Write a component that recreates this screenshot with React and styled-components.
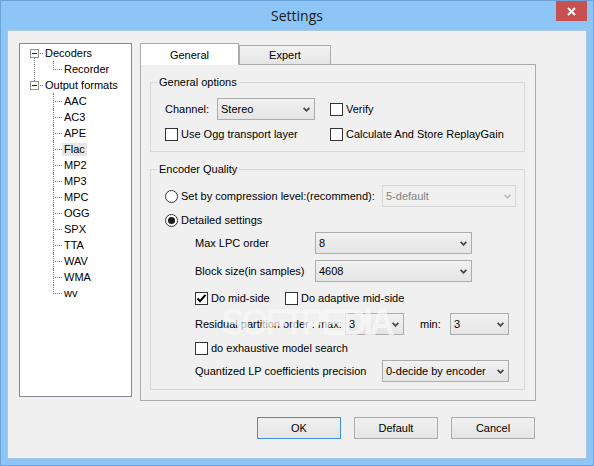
import styled, { createGlobalStyle, css } from "styled-components"

const GlobalStyle = createGlobalStyle`
  html, body {
    margin: 0;
    padding: 0;
  }
  body {
    width: 594px;
    height: 466px;
    overflow: hidden;
    font-family: "Liberation Sans", Arial, sans-serif;
    font-size: 11px;
    color: #000;
  }
  * {
    box-sizing: border-box;
  }
`

const Window = styled.div`
  position: relative;
  width: 594px;
  height: 466px;
  display: flex;
  flex-direction: column;
  padding: 0 6px 6px;
  background: #8cc5f6;
  border: 1px solid #6ea3d8;
`

const TitleBar = styled.div`
  height: 29px;
  display: grid;
  grid-template-columns: 1fr auto 1fr;
  align-items: center;
`

const Title = styled.div`
  grid-column: 2;
  font-family: "Open Sans", "Noto Sans", sans-serif;
  font-size: 14px;
  color: #1b1b1b;
`

const CloseButton = styled.div`
  justify-self: end;
  align-self: start;
  width: 31px;
  height: 20px;
  display: flex;
  align-items: center;
  justify-content: center;
  background: #c75050;
`

const Client = styled.div`
  flex: 1;
  display: flex;
  flex-direction: column;
  background: #f0f0f0;
  border: 1px solid #a9c6e2;
`

const Body = styled.div`
  display: flex;
  gap: 8px;
  padding: 12px 0 0 11px;
`

/* tree on the left */
const Tree = styled.div`
  width: 113px;
  height: 354px;
  padding-top: 1px;
  background: #fff;
  border: 1px solid #828790;
`

const TreeNode = styled.div`
  position: relative;
  ${(p) =>
    !p.$last &&
    css`
      &::before {
        content: "";
        position: absolute;
        left: 14px;
        top: 13px;
        bottom: -4px;
        border-left: 1px dotted #7a7a7a;
      }
    `}
`

const NodeRow = styled.div`
  height: 16px;
  display: flex;
  align-items: center;
  padding-left: 10px;
`

const Expander = styled.span`
  position: relative;
  width: 9px;
  height: 9px;
  border: 1px solid #919191;
  background: #fff;

  &::after {
    content: "";
    position: absolute;
    left: 1px;
    top: 3px;
    width: 5px;
    height: 1px;
    background: #222;
  }
`

const HDots = styled.span`
  width: 3px;
  margin-left: 1px;
  border-top: 1px dotted #7a7a7a;
`

const NodeText = styled.span`
  padding: 0 2px;
  line-height: 13px;
  white-space: nowrap;
  background: ${(p) => (p.$selected ? "#e6e6e6" : "transparent")};
`

const LeafRow = styled.div`
  position: relative;
  height: 16px;
  display: flex;
  align-items: center;
  padding-left: 42px;

  &::before {
    content: "";
    position: absolute;
    left: 33px;
    top: 0;
    height: ${(p) => (p.$last ? "9px" : "16px")};
    border-left: 1px dotted #7a7a7a;
  }

  &::after {
    content: "";
    position: absolute;
    left: 35px;
    top: 8px;
    width: 7px;
    border-top: 1px dotted #7a7a7a;
  }
`

/* tabs */
const Tabs = styled.div`
  width: 396px;
  display: flex;
  flex-direction: column;
`

const TabStrip = styled.div`
  height: 21px;
  display: flex;
  align-items: flex-end;
`

const Tab = styled.div`
  width: ${(p) => p.$w}px;
  display: flex;
  align-items: center;
  justify-content: center;
  border: 1px solid #acacac;
  border-bottom: none;
  ${(p) =>
    p.$active
      ? css`
          height: 22px;
          margin-bottom: -1px;
          position: relative;
          z-index: 1;
          background: #fff;
        `
      : css`
          height: 19px;
          background: linear-gradient(#f2f2f2, #e5e5e5);
        `}
`

const Panel = styled.div`
  height: 337px;
  padding: 10px 10px 0 9px;
  background: #f0f0f0;
  border: 1px solid #acacac;
`

const Group = styled.fieldset`
  margin: ${(p) => p.$mt || 0}px 0 0;
  padding: 9px 8px ${(p) => p.$pb}px 14px;
  min-width: 0;
  border: 1px solid #d9d9d9;
`

const Legend = styled.legend`
  margin-left: -8px;
  padding: 0 2px;
  line-height: 14px;
`

const OptionsGrid = styled.div`
  display: grid;
  grid-template-columns: 165px 1fr;
  grid-template-rows: 22px 16px;
  row-gap: 6px;
  align-items: center;
`

const Row = styled.div`
  height: ${(p) => p.$h}px;
  margin-top: ${(p) => p.$mt || 0}px;
  padding-left: ${(p) => p.$indent || 0}px;
  display: flex;
  align-items: center;
`

const Label = styled.span`
  width: ${(p) => (p.$w ? `${p.$w}px` : "auto")};
  margin-left: ${(p) => p.$ml || 0}px;
  flex-shrink: 0;
  white-space: nowrap;
`

const Combo = styled.div`
  width: ${(p) => p.$w}px;
  height: 22px;
  margin-left: ${(p) => (p.$push ? "auto" : "0")};
  display: flex;
  align-items: center;
  justify-content: space-between;
  padding: 0 4px 0 3px;
  border: 1px solid ${(p) => (p.$disabled ? "#d9d9d9" : "#acacac")};
  background: ${(p) =>
    p.$disabled ? "#f0f0f0" : "linear-gradient(#f1f1f1, #e5e5e5)"};
  color: ${(p) => (p.$disabled ? "#838383" : "#000")};
  white-space: nowrap;
`

const Choice = styled.label`
  width: ${(p) => (p.$w ? `${p.$w}px` : "auto")};
  display: inline-flex;
  align-items: center;
  gap: 3px;
  white-space: nowrap;
`

const Box = styled.span`
  width: 13px;
  height: 13px;
  flex-shrink: 0;
  display: flex;
  align-items: center;
  justify-content: center;
  background: #fff;
  border: 1px solid #333;
`

const Circle = styled.span`
  width: 13px;
  height: 13px;
  flex-shrink: 0;
  display: flex;
  align-items: center;
  justify-content: center;
  border-radius: 50%;
  background: #fff;
  border: 1px solid #333;

  &::after {
    content: "";
    width: 7px;
    height: 7px;
    border-radius: 50%;
    background: ${(p) => (p.$on ? "#1c1c1c" : "transparent")};
  }
`

const Footer = styled.div`
  display: flex;
  justify-content: flex-end;
  gap: 13px;
  margin-top: 16px;
  padding-right: 51px;
`

const Button = styled.div`
  width: 84px;
  height: 22px;
  display: flex;
  align-items: center;
  justify-content: center;
  border: 1px solid ${(p) => (p.$default ? "#3d8ee0" : "#acacac")};
  background: linear-gradient(#f0f0f0, #e5e5e5);
`

// faint site watermark laid over the dialog
const Watermark = styled.div`
  position: absolute;
  left: 220px;
  top: 304px;
  font-family: "Liberation Sans", Arial, sans-serif;
  font-weight: bold;
  font-size: 36px;
  line-height: 1;
  letter-spacing: -4px;
  color: rgba(255, 255, 255, 0.7);
  text-shadow: 0 0 1px rgba(0, 0, 0, 0.06);
  pointer-events: none;

  sup {
    font-size: 9px;
    letter-spacing: 0;
    vertical-align: top;
    margin-left: 3px;
  }
`

const Chevron = ({ disabled }) => (
  <svg width="7" height="5" viewBox="0 0 7 5">
    <polyline
      points="0.6,0.8 3.5,3.8 6.4,0.8"
      fill="none"
      stroke={disabled ? "#bdbdbd" : "#444"}
      strokeWidth="1.7"
    />
  </svg>
)

const Select = ({ value, w, disabled, push }) => (
  <Combo $w={w} $disabled={disabled} $push={push}>
    <span>{value}</span>
    <Chevron disabled={disabled} />
  </Combo>
)

const Checkbox = ({ children, checked, w }) => (
  <Choice $w={w}>
    <Box>
      {checked && (
        <svg width="11" height="11" viewBox="0 0 11 11">
          <polyline
            points="1.5,5.5 4,8.2 9.5,1.8"
            fill="none"
            stroke="#000"
            strokeWidth="2"
          />
        </svg>
      )}
    </Box>
    {children}
  </Choice>
)

const Radio = ({ children, checked }) => (
  <Choice>
    <Circle $on={checked} />
    {children}
  </Choice>
)

const formats = ["AAC", "AC3", "APE", "Flac", "MP2", "MP3", "MPC", "OGG", "SPX", "TTA", "WAV", "WMA", "wv"]

function App() {
  return (
    <>
      <GlobalStyle />
      <Window>
        <TitleBar>
          <Title>Settings</Title>
          <CloseButton>
            <svg width="9" height="9" viewBox="0 0 9 9">
              <path d="M1 1 L8 8 M8 1 L1 8" stroke="#fff" strokeWidth="2" />
            </svg>
          </CloseButton>
        </TitleBar>

        <Client>
          <Body>
            <Tree>
              <TreeNode>
                <NodeRow>
                  <Expander />
                  <HDots />
                  <NodeText>Decoders</NodeText>
                </NodeRow>
                <LeafRow $last>
                  <NodeText>Recorder</NodeText>
                </LeafRow>
              </TreeNode>
              <TreeNode $last>
                <NodeRow>
                  <Expander />
                  <HDots />
                  <NodeText>Output formats</NodeText>
                </NodeRow>
                {formats.map((f, i) => (
                  <LeafRow key={f} $last={i === formats.length - 1}>
                    <NodeText $selected={f === "Flac"}>{f}</NodeText>
                  </LeafRow>
                ))}
              </TreeNode>
            </Tree>

            <Tabs>
              <TabStrip>
                <Tab $w={99} $active>General</Tab>
                <Tab $w={92}>Expert</Tab>
              </TabStrip>
              <Panel>
                <Group $pb={9}>
                  <Legend>General options</Legend>
                  <OptionsGrid>
                    <Row $h={22}>
                      <Label $w={52}>Channel:</Label>
                      <Select value="Stereo" w={98} />
                    </Row>
                    <Checkbox>Verify</Checkbox>
                    <Checkbox>Use Ogg transport layer</Checkbox>
                    <Checkbox>Calculate And Store ReplayGain</Checkbox>
                  </OptionsGrid>
                </Group>

                <Group $mt={10} $pb={7}>
                  <Legend>Encoder Quality</Legend>
                  <Row $h={22}>
                    <Radio>Set by compression level:(recommend):</Radio>
                    <Select value="5-default" w={134} disabled push />
                  </Row>
                  <Row $h={18} $mt={4}>
                    <Radio checked>Detailed settings</Radio>
                  </Row>
                  <Row $h={22} $mt={3} $indent={30}>
                    <Label $w={120}>Max LPC order</Label>
                    <Select value="8" w={157} />
                  </Row>
                  <Row $h={22} $mt={6} $indent={30}>
                    <Label $w={120}>Block size(in samples)</Label>
                    <Select value="4608" w={157} />
                  </Row>
                  <Row $h={20} $mt={6} $indent={30}>
                    <Checkbox checked w={90}>Do mid-side</Checkbox>
                    <Checkbox>Do adaptive mid-side</Checkbox>
                  </Row>
                  <Row $h={22} $mt={5} $indent={30}>
                    <Label $w={150}>Residual partition order : max:</Label>
                    <Select value="3" w={59} />
                    <Label $w={30} $ml={16}>min:</Label>
                    <Select value="3" w={59} />
                  </Row>
                  <Row $h={20} $mt={3} $indent={30}>
                    <Checkbox>do exhaustive model search</Checkbox>
                  </Row>
                  <Row $h={22} $mt={2} $indent={30}>
                    <Label $w={187}>Quantized LP coefficients precision</Label>
                    <Select value="0-decide by encoder" w={127} />
                  </Row>
                </Group>
              </Panel>
            </Tabs>
          </Body>

          <Footer>
            <Button $default>OK</Button>
            <Button>Default</Button>
            <Button>Cancel</Button>
          </Footer>
        </Client>

        <Watermark>
          SOFTPEDIA<sup>®</sup>
        </Watermark>
      </Window>
    </>
  )
}

export default App
